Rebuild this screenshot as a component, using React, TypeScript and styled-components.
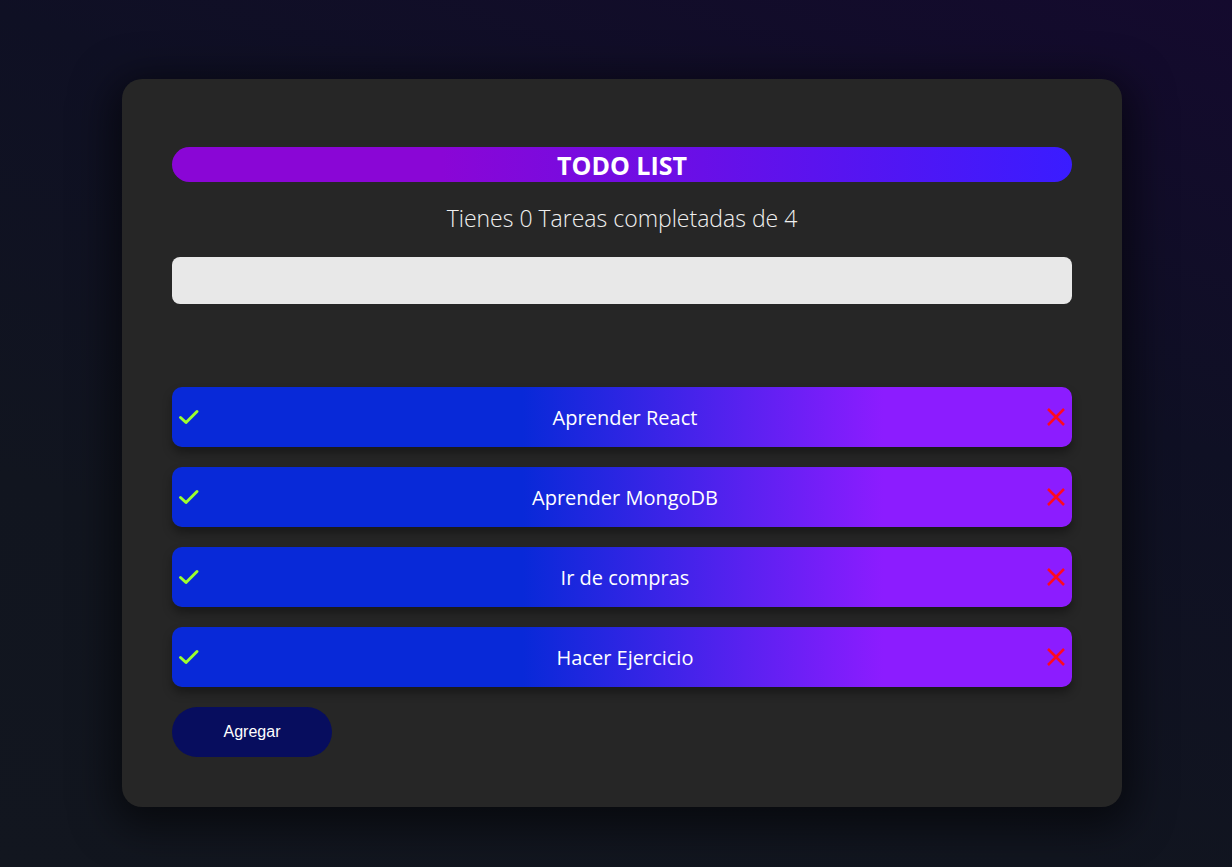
import React from "react";
import styled, { createGlobalStyle } from "styled-components";

const Global = createGlobalStyle`
  html, body { margin: 0; padding: 0; }
  body {
    min-height: 867px;
    background: linear-gradient(200deg, #140a2e 0%, #0f1024 35%, #11151f 70%, #12161f 100%);
    font-family: "Open Sans", "Noto Sans", sans-serif;
  }
`;

const Page = styled.div`
  display: flex;
  justify-content: center;
  padding: 79px 0 0 12px;
  min-height: 867px;
  box-sizing: border-box;
`;

const Card = styled.div`
  width: 1000px;
  height: 728px;
  box-sizing: border-box;
  background: #262626;
  border-radius: 20px;
  padding: 68px 50px 50px;
  box-shadow: 0 10px 40px 10px rgba(0, 0, 0, 0.55);
  display: flex;
  flex-direction: column;
`;

const Title = styled.h1`
  margin: 0;
  height: 35px;
  border-radius: 18px;
  background: linear-gradient(90deg, #8a06d6 30%, #3a1cff 100%);
  color: #fff;
  font-family: "Open Sans", sans-serif;
  font-weight: 700;
  font-size: 25px;
  line-height: 37px;
  text-align: center;
`;

const Subtitle = styled.p`
  margin: 14px 0 0;
  color: #f0f0f0;
  font-weight: 300;
  font-size: 23px;
  line-height: 44px;
  text-align: center;
`;

const Input = styled.input`
  margin-top: 17px;
  height: 47px;
  border: none;
  outline: none;
  border-radius: 8px;
  background: #e8e8e8;
  padding: 0 18px;
  font-size: 18px;
  caret-color: #3a3a8a;
  font-family: "Open Sans", sans-serif;
`;

const List = styled.ul`
  list-style: none;
  margin: 83px 0 0;
  padding: 0;
  display: flex;
  flex-direction: column;
  gap: 20px;
`;

const Item = styled.li`
  position: relative;
  height: 60px;
  border-radius: 10px;
  background: linear-gradient(90deg, #0829d8 39%, #8c1cff 79%);
  box-shadow: 0 6px 10px rgba(0, 0, 0, 0.35);
  display: flex;
  align-items: center;
  justify-content: space-between;
  padding: 0 6px;
`;

const Label = styled.span`
  position: absolute;
  left: 6px;
  right: 0;
  text-align: center;
  color: #fff;
  font-size: 20px;
  pointer-events: none;
`;

const IconBtn = styled.button`
  background: none;
  border: none;
  padding: 0;
  display: flex;
  align-items: center;
  cursor: pointer;
`;

const AddButton = styled.button`
  margin-top: 20px;
  width: 160px;
  height: 50px;
  border: none;
  border-radius: 25px;
  background: #070d5e;
  color: #fff;
  font-family: "Liberation Sans", Arial, sans-serif;
  font-size: 16px;
  cursor: pointer;
`;

const Check = () => (
  <svg width="22" height="22" viewBox="0 0 22 22">
    <path d="M2.5 11.5 L8 16.5 L19 5.5" fill="none" stroke="#9dff2e" strokeWidth="3" strokeLinecap="round" strokeLinejoin="round" />
  </svg>
);

const Cross = () => (
  <svg width="20" height="20" viewBox="0 0 20 20">
    <path d="M2 2 L18 18 M18 2 L2 18" fill="none" stroke="#ff0a1e" strokeWidth="2.5" />
  </svg>
);

const todos = ["Aprender React", "Aprender MongoDB", "Ir de compras", "Hacer Ejercicio"];

export default function App() {
  return (
    <>
      <Global />
      <Page>
        <Card>
          <Title>TODO LIST</Title>
          <Subtitle>Tienes 0 Tareas completadas de 4</Subtitle>
          <Input autoFocus />
          <List>
            {todos.map((t) => (
              <Item key={t}>
                <IconBtn aria-label="completar"><Check /></IconBtn>
                <Label>{t}</Label>
                <IconBtn aria-label="eliminar"><Cross /></IconBtn>
              </Item>
            ))}
          </List>
          <div><AddButton>Agregar</AddButton></div>
        </Card>
      </Page>
    </>
  );
}
